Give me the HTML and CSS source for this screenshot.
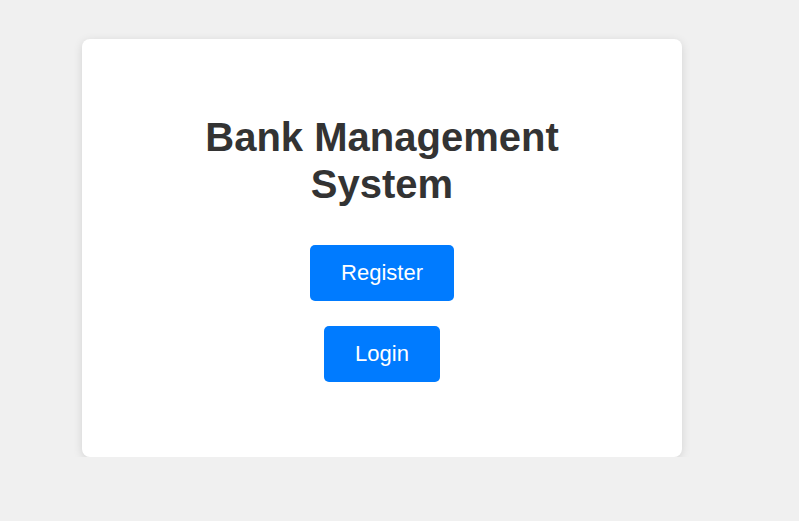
FILE: index.html
```html
<!DOCTYPE html>
<html lang="en">
<head>
<meta charset="utf-8">
<title>Bank Management System</title>
<link rel="stylesheet" href="styles.css">
</head>
<body>
  <main class="page">
    <section class="card">
      <h1 class="title">Bank Management System</h1>
      <div class="actions">
        <button class="btn">Register</button>
        <button class="btn">Login</button>
      </div>
    </section>
  </main>
</body>
</html>
```
FILE: styles.css
```css
html, body {
  margin: 0;
  padding: 0;
  background: #f0f0f0;
  font-family: "Liberation Sans", Arial, sans-serif;
}

.page {
  padding: 39px 0 0 82px;
}

.card {
  box-sizing: border-box;
  width: 600px;
  height: 418px;
  background: #ffffff;
  border-radius: 8px;
  box-shadow: 0 2px 10px rgba(0, 0, 0, 0.12);
  padding: 75px 50px 0;
  text-align: center;
}

.title {
  margin: 0 0 37px;
  font-size: 40px;
  font-weight: bold;
  line-height: 47px;
  color: #333333;
}

.actions {
  display: flex;
  flex-direction: column;
  align-items: center;
  gap: 25px;
}

.btn {
  font-family: "Liberation Sans", Arial, sans-serif;
  font-size: 22px;
  line-height: 26px;
  padding: 15px 31px;
  border: none;
  border-radius: 5px;
  background: #007bff;
  color: #ffffff;
  cursor: pointer;
}
```
